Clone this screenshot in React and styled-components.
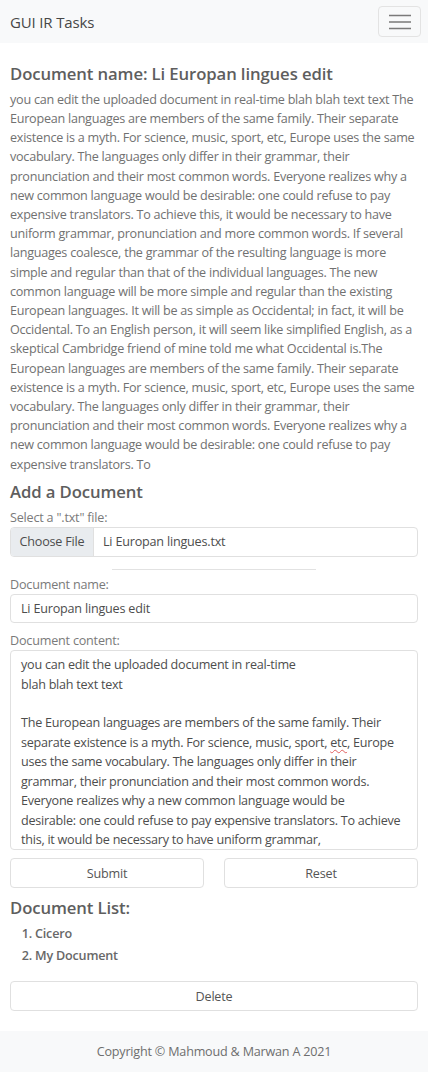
import React from "react";
import styled, { createGlobalStyle } from "styled-components";

const GlobalStyle = createGlobalStyle`
  html, body { margin: 0; padding: 0; background: #fff; }
  body {
    font-family: "Open Sans", "Noto Sans", sans-serif;
    font-size: 12.6px;
    color: #6e6e6e;
  }
  * { box-sizing: border-box; }
`;

const Page = styled.div`
  display: flex;
  flex-direction: column;
  min-height: 1072px;
`;

const Navbar = styled.nav`
  height: 43px;
  background: #f8f9fa;
  display: flex;
  align-items: center;
  justify-content: space-between;
  padding: 0 7px 0 10px;
`;

const Brand = styled.a`
  font-size: 15px;
  color: #474747;
  text-decoration: none;
  letter-spacing: -0.15px;
`;

const Toggler = styled.button`
  width: 43px;
  height: 31px;
  padding: 0;
  background: transparent;
  border: 1px solid #e3e3e3;
  border-radius: 4px;
  display: flex;
  align-items: center;
  justify-content: center;
`;

const Main = styled.main`
  flex: 1;
  padding: 20px 10px 0;
`;

const Heading = styled.h4`
  margin: ${(p) => p.$mt || 0}px 0 ${(p) => p.$mb || 0}px;
  font-size: 16.7px;
  line-height: 22.8px;
  font-weight: 600;
  color: #5e5e5e;
  letter-spacing: -0.1px;
`;

const Paragraph = styled.p`
  margin: 0;
  line-height: 19.2px;
  color: #717171;
  letter-spacing: -0.25px;
`;

const Label = styled.label`
  display: block;
  margin-top: ${(p) => p.$mt || 0}px;
  line-height: 19.2px;
  color: #7a7a7a;
  letter-spacing: -0.2px;
`;

const FileField = styled.div`
  display: flex;
  height: 30px;
  border: 1px solid #e0e0e0;
  border-radius: 4px;
  overflow: hidden;
  color: #4d4d4d;
  letter-spacing: -0.2px;
`;

const FileButton = styled.span`
  width: 83px;
  background: #e9ecef;
  border-right: 1px solid #e0e0e0;
  display: flex;
  align-items: center;
  justify-content: center;
`;

const FileName = styled.span`
  display: flex;
  align-items: center;
  padding-left: 9px;
`;

const Divider = styled.hr`
  width: 50%;
  margin: 12px auto 5px;
  border: 0;
  border-top: 1px solid #e2e2e2;
`;

const TextInput = styled.div`
  height: 29px;
  border: 1px solid #e0e0e0;
  border-radius: 4px;
  padding: 0 10px;
  display: flex;
  align-items: center;
  color: #4d4d4d;
  letter-spacing: -0.2px;
`;

const TextArea = styled.div`
  height: 200px;
  border: 1px solid #e0e0e0;
  border-radius: 4px;
  padding: 4px 16px 0 10px;
  line-height: 19.4px;
  color: #4d4d4d;
  overflow: hidden;
  white-space: pre-wrap;
  letter-spacing: -0.25px;
`;

const Misspelled = styled.span`
  text-decoration: underline wavy #e06060;
  text-decoration-thickness: 1px;
  text-underline-offset: 2px;
`;

const ButtonRow = styled.div`
  display: grid;
  grid-template-columns: 1fr 1fr;
  gap: 20px;
  margin-top: 8px;
`;

const Button = styled.button`
  display: block;
  width: 100%;
  height: 30px;
  margin-top: ${(p) => p.$mt || 0}px;
  background: #fff;
  border: 1px solid #e0e0e0;
  border-radius: 4px;
  font-family: inherit;
  font-size: 12.6px;
  color: #555;
  letter-spacing: -0.2px;
`;

const DocList = styled.ol`
  margin: 3px 0 0;
  padding-left: 25px;
  line-height: 22px;
  color: #686868;
  font-weight: 600;
  letter-spacing: -0.2px;
`;

const Footer = styled.footer`
  height: 41px;
  margin-top: 20px;
  background: #f8f9fa;
  display: flex;
  align-items: center;
  justify-content: center;
  color: #6e6e6e;
  letter-spacing: -0.2px;
`;

const paragraph =
  "you can edit the uploaded document in real-time blah blah text text The European languages are members of the same family. Their separate existence is a myth. For science, music, sport, etc, Europe uses the same vocabulary. The languages only differ in their grammar, their pronunciation and their most common words. Everyone realizes why a new common language would be desirable: one could refuse to pay expensive translators. To achieve this, it would be necessary to have uniform grammar, pronunciation and more common words. If several languages coalesce, the grammar of the resulting language is more simple and regular than that of the individual languages. The new common language will be more simple and regular than the existing European languages. It will be as simple as Occidental; in fact, it will be Occidental. To an English person, it will seem like simplified English, as a skeptical Cambridge friend of mine told me what Occidental is.The European languages are members of the same family. Their separate existence is a myth. For science, music, sport, etc, Europe uses the same vocabulary. The languages only differ in their grammar, their pronunciation and their most common words. Everyone realizes why a new common language would be desirable: one could refuse to pay expensive translators. To";

export default function App() {
  return (
    <>
      <GlobalStyle />
      <Page>
        <Navbar>
          <Brand href="#">GUI IR Tasks</Brand>
          <Toggler aria-label="Toggle navigation">
            <svg width="22" height="16" viewBox="0 0 22 16">
              <path d="M0 1.5h22M0 8h22M0 14.5h22" stroke="#7a7a7a" strokeWidth="1.5" />
            </svg>
          </Toggler>
        </Navbar>
        <Main>
          <Heading $mb={4}>Document name: Li Europan lingues edit</Heading>
          <Paragraph>{paragraph}</Paragraph>
          <Heading $mt={7} $mb={4}>Add a Document</Heading>
          <Label>Select a ".txt" file:</Label>
          <FileField>
            <FileButton>Choose File</FileButton>
            <FileName>Li Europan lingues.txt</FileName>
          </FileField>
          <Divider />
          <Label>Document name:</Label>
          <TextInput>Li Europan lingues edit</TextInput>
          <Label $mt={8}>Document content:</Label>
          <TextArea>
            {"you can edit the uploaded document in real-time\nblah blah text text\n\nThe European languages are members of the same family. Their separate existence is a myth. For science, music, sport, "}
            <Misspelled>etc</Misspelled>
            {", Europe uses the same vocabulary. The languages only differ in their grammar, their pronunciation and their most common words. Everyone realizes why a new common language would be desirable: one could refuse to pay expensive translators. To achieve this, it would be necessary to have uniform grammar, pronunciation and more common words."}
          </TextArea>
          <ButtonRow>
            <Button>Submit</Button>
            <Button>Reset</Button>
          </ButtonRow>
          <Heading $mt={9}>Document List:</Heading>
          <DocList>
            <li>Cicero</li>
            <li>My Document</li>
          </DocList>
          <Button $mt={14}>Delete</Button>
        </Main>
        <Footer>Copyright © Mahmoud &amp; Marwan A 2021</Footer>
      </Page>
    </>
  );
}
